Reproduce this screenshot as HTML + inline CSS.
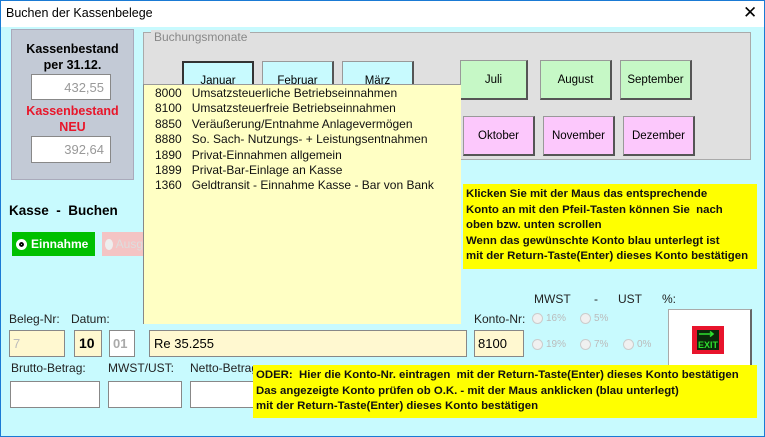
<!DOCTYPE html>
<html><head><meta charset="utf-8"><style>
*{margin:0;padding:0;box-sizing:border-box}
body{width:765px;height:437px;overflow:hidden;font-family:"Liberation Sans",sans-serif;font-size:12px;color:#000;background:#fff}
#win{position:absolute;left:0;top:0;width:765px;height:437px;border:1px solid #1a7ad4;background:#c8fafe}
.a{position:absolute}
.tb{left:0;top:0;width:763px;height:26px;background:#fff}
.btn{position:absolute;border:1px solid #999;border-right:2px solid #555;border-bottom:2px solid #555;text-align:center;font-size:11.5px;display:flex;align-items:center;justify-content:center}
.g{background:#c6f8c6}.p{background:#fcc8fc}.c{background:#c8fafe}
.inp{position:absolute;border:1px solid #888;background:#fff}
.lbl{position:absolute;font-size:12px;color:#222}
.y{background:#ffff00;font-weight:bold;font-size:11.4px;letter-spacing:0;line-height:15.6px;color:#111;white-space:nowrap;overflow:hidden}
.rad{position:absolute;font-size:10px;color:#bbb;display:flex;align-items:center;gap:3px}
.rad i{display:inline-block;width:11px;height:11px;border-radius:50%;border:1px solid #ccc;background:#f0f0f0}
</style></head><body><div id="win">
<div class="a tb"><span class="a" style="left:5px;top:5px;font-size:12.5px">Buchen der Kassenbelege</span><span class="a" style="left:742px;top:2px;font-size:17px">✕</span></div>

<div class="a" style="left:10px;top:28px;width:123px;height:151px;background:#c3cad6;border:1px solid #aab"></div>
<div class="a" style="left:10px;top:40px;width:123px;text-align:center;font-weight:bold;font-size:12.5px;line-height:16px">Kassenbestand<br>per 31.12.</div>
<div class="inp" style="left:30px;top:73px;width:80px;height:26px;text-align:right;padding:5px 6px;color:#999;font-size:13px">432,55</div>
<div class="a" style="left:10px;top:102px;width:123px;text-align:center;font-weight:bold;font-size:12.5px;line-height:16px;color:#e8162a">Kassenbestand<br>NEU</div>
<div class="inp" style="left:30px;top:135px;width:80px;height:27px;text-align:right;padding:5px 6px;color:#999;font-size:13px">392,64</div>

<div class="a" style="left:142px;top:31px;width:608px;height:128px;background:#e0e0e0;border:1px solid #aaa"></div>
<div class="a" style="left:150px;top:29px;background:#e0e0e0;padding:0 3px;color:#888;font-size:12px">Buchungsmonate</div>
<div class="btn c" style="left:181px;top:60px;width:72px;height:40px;border:2px solid #333">Januar</div>
<div class="btn c" style="left:261px;top:60px;width:72px;height:40px">Februar</div>
<div class="btn c" style="left:341px;top:60px;width:72px;height:40px">März</div>
<div class="btn g" style="left:459px;top:59px;width:68px;height:40px">Juli</div>
<div class="btn g" style="left:539px;top:59px;width:72px;height:40px">August</div>
<div class="btn g" style="left:619px;top:59px;width:72px;height:40px">September</div>
<div class="btn p" style="left:462px;top:115px;width:72px;height:40px">Oktober</div>
<div class="btn p" style="left:542px;top:115px;width:72px;height:40px">November</div>
<div class="btn p" style="left:622px;top:115px;width:72px;height:40px">Dezember</div>

<div class="a" style="left:142px;top:83px;width:318px;height:240px;background:#ffffc4;border-left:1px solid #888;border-top:1px solid #999;padding:1px 0 0 11px;font-size:12px;line-height:15.4px;color:#111">
<div>8000&nbsp;&nbsp;&nbsp;Umsatzsteuerliche Betriebseinnahmen</div>
<div>8100&nbsp;&nbsp;&nbsp;Umsatzsteuerfreie Betriebseinnahmen</div>
<div>8850&nbsp;&nbsp;&nbsp;Veräußerung/Entnahme Anlagevermögen</div>
<div>8880&nbsp;&nbsp;&nbsp;So. Sach- Nutzungs- + Leistungsentnahmen</div>
<div>1890&nbsp;&nbsp;&nbsp;Privat-Einnahmen allgemein</div>
<div>1899&nbsp;&nbsp;&nbsp;Privat-Bar-Einlage an Kasse</div>
<div>1360&nbsp;&nbsp;&nbsp;Geldtransit - Einnahme Kasse - Bar von Bank</div>
</div>

<div class="a" style="left:8px;top:202px;font-weight:bold;font-size:13.5px">Kasse&nbsp; -&nbsp; Buchen</div>
<div class="a" style="left:11px;top:231px;width:83px;height:24px;background:#00c000;color:#fff;font-weight:bold;display:flex;align-items:center;padding-left:4px;gap:4px"><i style="display:inline-block;width:11px;height:11px;border-radius:50%;background:#fff;border:3px solid #fff;box-shadow:inset 0 0 0 2px #000"></i>Einnahme</div>
<div class="a" style="left:101px;top:231px;width:41px;height:24px;background:#f4c4c4;color:#ddd;display:flex;align-items:center;padding-left:3px;gap:3px"><i style="display:inline-block;width:11px;height:11px;border-radius:50%;background:#eee"></i>Ausg</div>

<div class="a y" style="left:462px;top:183px;width:294px;height:85px;padding:3px 3px">Klicken Sie mit der Maus das entsprechende<br>Konto an mit den Pfeil-Tasten können Sie&nbsp; nach<br>oben bzw. unten scrollen<br>Wenn das gewünschte Konto blau unterlegt ist<br>mit der Return-Taste(Enter) dieses Konto bestätigen</div>

<div class="lbl" style="left:8px;top:311px">Beleg-Nr:</div>
<div class="lbl" style="left:70px;top:311px">Datum:</div>
<div class="inp" style="left:8px;top:329px;width:56px;height:27px;background:#fff8d0;color:#bbb;font-size:13px;padding:5px 3px">7</div>
<div class="inp" style="left:73px;top:329px;width:28px;height:27px;background:#fff8d0;font-weight:bold;font-size:14px;padding:4px 4px">10</div>
<div class="inp" style="left:108px;top:329px;width:26px;height:27px;color:#aaa;font-weight:bold;font-size:13px;padding:5px 3px">01</div>
<div class="inp" style="left:148px;top:329px;width:318px;height:27px;background:#fff8d0;font-size:13px;padding:5px 4px">Re 35.255</div>

<div class="lbl" style="left:533px;top:291px">MWST&nbsp;&nbsp;&nbsp;&nbsp;&nbsp;&nbsp;&nbsp;-&nbsp;&nbsp;&nbsp;&nbsp;&nbsp;&nbsp;UST&nbsp;&nbsp;&nbsp;&nbsp;&nbsp;&nbsp;%:</div>
<div class="lbl" style="left:473px;top:311px">Konto-Nr:</div>
<div class="rad" style="left:531px;top:312px"><i></i>16%</div>
<div class="rad" style="left:579px;top:312px"><i></i>5%</div>
<div class="inp" style="left:473px;top:329px;width:50px;height:27px;background:#fff8d0;font-size:13px;padding:5px 3px">8100</div>
<div class="rad" style="left:531px;top:338px"><i></i>19%</div>
<div class="rad" style="left:579px;top:338px"><i></i>7%</div>
<div class="rad" style="left:622px;top:338px"><i></i>0%</div>

<div class="a" style="left:667px;top:308px;width:84px;height:60px;background:#fff;border:1px solid #aaa;border-right:2px solid #666"></div>
<svg class="a" style="left:691px;top:325px" width="32" height="28" viewBox="0 0 32 28"><rect width="32" height="28" fill="#e8142c"/><rect x="5" y="4" width="22" height="20" fill="#0a2a0a"/><path d="M7 8h14M18 5.5l3 2.5-3 2.5" stroke="#2ee02e" stroke-width="1.6" fill="none"/><text x="16" y="22" font-size="9" font-weight="bold" fill="#2ee02e" text-anchor="middle" font-family="Liberation Sans Narrow,Liberation Sans,sans-serif">EXIT</text></svg>

<div class="lbl" style="left:10px;top:360px">Brutto-Betrag:</div>
<div class="lbl" style="left:107px;top:360px">MWST/UST:</div>
<div class="lbl" style="left:189px;top:360px">Netto-Betrag:</div>
<div class="inp" style="left:9px;top:380px;width:90px;height:27px"></div>
<div class="inp" style="left:107px;top:380px;width:74px;height:27px"></div>
<div class="inp" style="left:189px;top:380px;width:70px;height:27px"></div>

<div class="a y" style="left:252px;top:364px;width:504px;height:53px;padding:3px 3px">ODER:&nbsp; Hier die Konto-Nr. eintragen&nbsp; mit der Return-Taste(Enter) dieses Konto bestätigen<br>Das angezeigte Konto prüfen ob O.K. - mit der Maus anklicken (blau unterlegt)<br>mit der Return-Taste(Enter) dieses Konto bestätigen</div>
</div></body></html>
